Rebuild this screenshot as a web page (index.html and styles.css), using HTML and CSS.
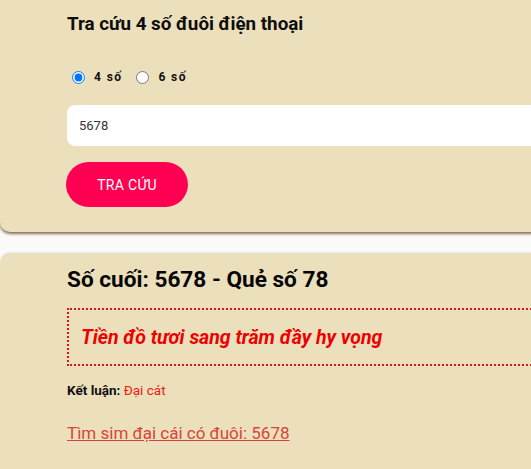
FILE: index.html
```html
<!DOCTYPE html>
<html lang="vi">
<head>
<meta charset="utf-8">
<title>Tra cứu 4 số đuôi điện thoại</title>
<link rel="stylesheet" href="styles.css">
</head>
<body>
<div class="page">
  <section class="card card-form">
    <h2 class="form-title">Tra cứu 4 số đuôi điện thoại</h2>
    <div class="radios">
      <label class="radio"><input type="radio" name="n" checked><span>4 số</span></label>
      <label class="radio"><input type="radio" name="n"><span>6 số</span></label>
    </div>
    <input class="field" type="text" value="5678">
    <button class="btn" type="button">TRA CỨU</button>
  </section>
  <section class="card card-result">
    <h2 class="result-title">Số cuối: 5678 - Quẻ số 78</h2>
    <div class="verse">Tiền đồ tươi sang trăm đầy hy vọng</div>
    <p class="conclusion"><b>Kết luận:</b> <span class="good">Đại cát</span></p>
    <a class="find" href="#">Tìm sim đại cái có đuôi: 5678</a>
  </section>
</div>
</body>
</html>
```
FILE: styles.css
```css
html, body {
  margin: 0;
  padding: 0;
  background: #fbfbfa;
  overflow: hidden;
}
body {
  font-family: Roboto, "Liberation Sans", sans-serif;
  color: #111;
}
.page {
  width: 640px;
}
.card {
  background: #ecdfbb;
  padding-left: 67px;
}
.card-form {
  padding-top: 14px;
  padding-bottom: 25px;
  border-radius: 0 0 10px 10px;
  box-shadow: 0 2px 3px rgba(95, 65, 30, 0.75);
}
.form-title {
  margin: 0;
  font-size: 18.8px;
  line-height: 20px;
  font-weight: 700;
  color: #0d0d0d;
}
.radios {
  display: flex;
  align-items: center;
  gap: 9px;
  margin-top: 35px;
  height: 16px;
}
.radio {
  display: flex;
  align-items: center;
  font-size: 12px;
  font-weight: 700;
  letter-spacing: 1.4px;
}
.radio input {
  width: 13px;
  height: 13px;
  margin: 0 9px 0 5px;
}
.field {
  display: block;
  box-sizing: border-box;
  margin-top: 20px;
  width: 560px;
  height: 41px;
  border: none;
  border-radius: 8px;
  background: #fff;
  padding: 0 12px;
  font-family: inherit;
  font-size: 13px;
  color: #333;
}
.btn {
  display: block;
  margin-top: 16px;
  margin-left: -1px;
  width: 122px;
  height: 45px;
  border: none;
  border-radius: 23px;
  background: #ff0052;
  color: #fff;
  font-family: inherit;
  font-size: 14px;
  letter-spacing: 0.3px;
}
.card-result {
  margin-top: 21px;
  padding-top: 14px;
  padding-bottom: 30px;
  border-radius: 10px 10px 0 0;
  box-shadow: 0 -1px 2px rgba(0, 0, 0, 0.08);
}
.result-title {
  margin: 0;
  font-size: 22.6px;
  line-height: 26px;
  font-weight: 700;
  color: #050505;
}
.verse {
  margin-top: 15px;
  height: 54px;
  display: flex;
  align-items: center;
  padding-left: 12px;
  border: 2px dotted #e0141b;
  border-right: none;
  color: #ec0000;
  font-size: 19.5px;
  font-weight: 700;
  font-style: italic;
}
.conclusion {
  margin: 16px 0 0;
  font-size: 13.5px;
  line-height: 16px;
}
.conclusion b {
  font-weight: 700;
}
.good {
  color: #ee1c0c;
  font-size: 13.5px;
}
.find {
  display: inline-block;
  margin-top: 24px;
  font-size: 17px;
  line-height: 22px;
  color: #d5453b;
  text-decoration: underline;
}
```
